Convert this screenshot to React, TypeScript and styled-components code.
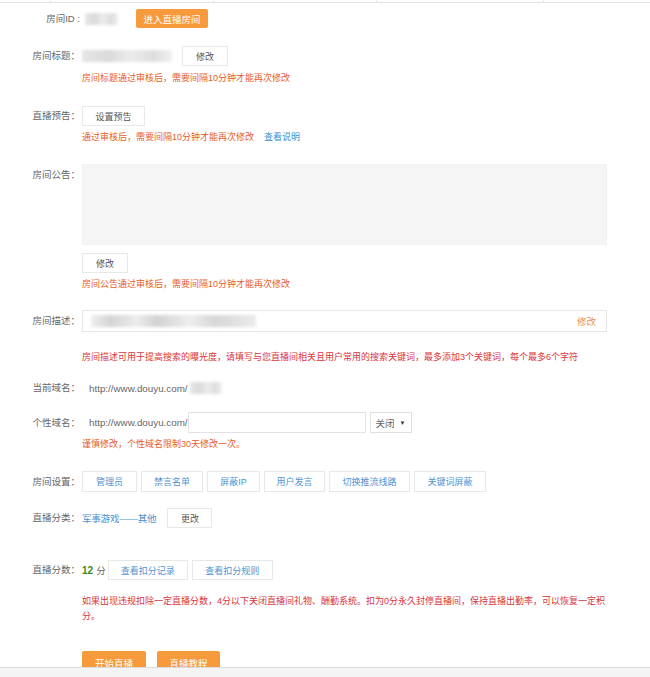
import * as React from "react";
import styled, { createGlobalStyle } from "styled-components";

const GlobalStyle = createGlobalStyle`
  html, body {
    margin: 0;
    padding: 0;
    background: #fff;
  }
  body {
    font-family: "Liberation Sans", "Noto Sans CJK SC", sans-serif;
  }
`;

const Page = styled.div`
  position: relative;
  width: 650px;
  height: 677px;
  overflow: hidden;
  background: #fff;
  color: #666;
  font-size: 9.5px;
`;

const TopStrip = styled.div`
  display: flex;
  height: 2px;
  border-bottom: 1px solid #e3e3e3;
`;

const TopCell = styled.div<{ $w: number }>`
  width: ${(p) => p.$w}px;
  border-right: 1px solid #ececec;
`;

const Form = styled.div`
  display: flex;
  flex-direction: column;
  padding-top: 6px;
`;

const Field = styled.div<{ $mt: number; $top?: boolean }>`
  display: grid;
  grid-template-columns: 82px 525px;
  align-items: ${(p) => (p.$top ? "start" : "center")};
  margin-top: ${(p) => p.$mt}px;
`;

const Label = styled.div<{ $pt?: number }>`
  text-align: right;
  padding-right: 2px;
  padding-top: ${(p) => p.$pt ?? 0}px;
  line-height: 14px;
  color: #666;
  white-space: nowrap;
`;

const Line = styled.div`
  display: flex;
  align-items: center;
`;

const Hint = styled.div<{ $tone: "orange" | "red"; $mt: number }>`
  grid-column: 2;
  margin-top: ${(p) => p.$mt}px;
  font-size: 9px;
  line-height: 15px;
  color: ${(p) => (p.$tone === "orange" ? "#e65d2b" : "#d8343b")};
  white-space: nowrap;
`;

const Link = styled.a`
  margin-left: 10px;
  color: #3d8fd6;
  cursor: pointer;
`;

const Blur = styled.span<{ $w: number; $ml?: number }>`
  display: inline-block;
  width: ${(p) => p.$w}px;
  height: 12px;
  margin-left: ${(p) => p.$ml ?? 0}px;
  background: linear-gradient(
    90deg,
    #e6e6e6 0%,
    #dadada 30%,
    #ececec 55%,
    #dddddd 80%,
    #f0f0f0 100%
  );
  filter: blur(1.5px);
`;

const OrangeButton = styled.button<{ $w: number; $ml?: number; $h?: number }>`
  width: ${(p) => p.$w}px;
  height: ${(p) => p.$h ?? 19}px;
  margin-left: ${(p) => p.$ml ?? 0}px;
  padding: 0;
  border: none;
  border-radius: 2px;
  background: #f69a3c;
  color: #fff;
  font-family: inherit;
  font-size: 9.5px;
  cursor: pointer;
`;

const Button = styled.button<{ $w: number; $ml?: number; $blue?: boolean; $h?: number }>`
  width: ${(p) => p.$w}px;
  height: ${(p) => p.$h ?? 20}px;
  margin-left: ${(p) => p.$ml ?? 0}px;
  padding: 0;
  border: 1px solid #e8e8e8;
  border-radius: 0;
  background: #fff;
  color: ${(p) => (p.$blue ? "#4f93d2" : "#555")};
  font-family: inherit;
  font-size: 9px;
  cursor: pointer;
`;

const NoticeBox = styled.textarea`
  box-sizing: border-box;
  width: 525px;
  height: 81px;
  margin: 0;
  border: 1px solid #f2f2f2;
  background: #f5f5f5;
  resize: none;
  outline: none;
`;

const Stack = styled.div`
  display: flex;
  flex-direction: column;
  align-items: flex-start;
`;

const DescBox = styled.div`
  box-sizing: border-box;
  display: flex;
  align-items: center;
  justify-content: space-between;
  width: 525px;
  height: 22px;
  padding: 0 10px 0 8px;
  border: 1px solid #e6e6e6;
`;

const DescBlur = styled.span`
  display: inline-block;
  width: 165px;
  height: 12px;
  background: linear-gradient(
    90deg,
    #efefef 0%,
    #d4d4d4 12%,
    #ececec 28%,
    #d2d2d2 40%,
    #eeeeee 60%,
    #d6d6d6 75%,
    #ebebeb 100%
  );
  filter: blur(1.5px);
`;

const EditText = styled.span`
  color: #e8923f;
  font-size: 9.5px;
`;

const Url = styled.span`
  padding-left: 7px;
  color: #666;
  font-size: 9.8px;
`;

const DomainInput = styled.input`
  box-sizing: border-box;
  width: 178px;
  height: 21px;
  margin: 0;
  border: 1px solid #e3e3e3;
  outline: none;
`;

const Select = styled.div`
  box-sizing: border-box;
  display: flex;
  align-items: center;
  justify-content: space-between;
  width: 42px;
  height: 21px;
  margin-left: 4px;
  padding: 0 5px 0 5px;
  border: 1px solid #e0e0e0;
  color: #666;
  font-size: 9.5px;
`;

const Caret = styled.span`
  font-size: 6px;
  color: #333;
`;

const ButtonRow = styled.div`
  display: flex;
  align-items: center;
  gap: 4px;
`;

const Category = styled.span`
  color: #4a8fd0;
  letter-spacing: -0.2px;
`;

const Score = styled.span`
  color: #2f8f1f;
  font-weight: bold;
  font-size: 10px;
`;

const Unit = styled.span`
  margin-left: 3px;
  color: #666;
`;

const Actions = styled.div`
  display: flex;
  gap: 11px;
  margin: 27px 0 0 82px;
`;

const BottomBar = styled.div`
  position: absolute;
  left: 0;
  right: 0;
  bottom: 0;
  height: 9px;
  border-top: 1px solid #dcdcdc;
  background: #f4f4f4;
`;

const roomButtons = [
  { text: "管理员", w: 55 },
  { text: "禁言名单", w: 62 },
  { text: "屏蔽IP", w: 53 },
  { text: "用户发言", w: 61 },
  { text: "切换推流线路", w: 81 },
  { text: "关键词屏蔽", w: 72 },
];

export default function App() {
  return (
    <Page>
      <GlobalStyle />
      <TopStrip>
        <TopCell $w={50} />
        <TopCell $w={162} />
        <TopCell $w={162} />
        <TopCell $w={166} />
      </TopStrip>

      <Form>
        <Field $mt={0}>
          <Label>房间ID :</Label>
          <Line>
            <Blur $w={33} $ml={3} />
            <OrangeButton $w={72} $ml={18}>
              进入直播房间
            </OrangeButton>
          </Line>
        </Field>

        <Field $mt={18}>
          <Label>房间标题：</Label>
          <Line>
            <Blur $w={90} />
            <Button $w={46} $ml={10}>
              修改
            </Button>
          </Line>
          <Hint $tone="orange" $mt={5}>
            房间标题通过审核后，需要间隔10分钟才能再次修改
          </Hint>
        </Field>

        <Field $mt={20}>
          <Label>直播预告：</Label>
          <Line>
            <Button $w={63}>设置预告</Button>
          </Line>
          <Hint $tone="orange" $mt={4}>
            通过审核后，需要间隔10分钟才能再次修改
            <Link>查看说明</Link>
          </Hint>
        </Field>

        <Field $mt={19} $top>
          <Label $pt={4}>房间公告：</Label>
          <Stack>
            <NoticeBox readOnly />
            <Button $w={46} style={{ marginTop: 8 }}>
              修改
            </Button>
          </Stack>
          <Hint $tone="orange" $mt={4}>
            房间公告通过审核后，需要间隔10分钟才能再次修改
          </Hint>
        </Field>

        <Field $mt={18}>
          <Label>房间描述：</Label>
          <DescBox>
            <DescBlur />
            <EditText>修改</EditText>
          </DescBox>
          <Hint $tone="red" $mt={18}>
            房间描述可用于提高搜索的曝光度，请填写与您直播间相关且用户常用的搜索关键词，最多添加3个关键词，每个最多6个字符
          </Hint>
        </Field>

        <Field $mt={16}>
          <Label>当前域名：</Label>
          <Line>
            <Url>http://www.douyu.com/</Url>
            <Blur $w={32} $ml={2} />
          </Line>
        </Field>

        <Field $mt={17}>
          <Label>个性域名：</Label>
          <Line>
            <Url>http://www.douyu.com/</Url>
            <DomainInput />
            <Select>
              关闭<Caret>▼</Caret>
            </Select>
          </Line>
          <Hint $tone="orange" $mt={4}>
            谨慎修改，个性域名限制30天修改一次。
          </Hint>
        </Field>

        <Field $mt={19}>
          <Label>房间设置：</Label>
          <ButtonRow>
            {roomButtons.map((b) => (
              <Button key={b.text} $w={b.w} $h={21} $blue>
                {b.text}
              </Button>
            ))}
          </ButtonRow>
        </Field>

        <Field $mt={16}>
          <Label>直播分类：</Label>
          <Line>
            <Category>军事游戏——其他</Category>
            <Button $w={45} $ml={11}>
              更改
            </Button>
          </Line>
        </Field>

        <Field $mt={32}>
          <Label>直播分数：</Label>
          <Line>
            <Score>12</Score>
            <Unit>分</Unit>
            <Button $w={80} $ml={2} $blue>
              查看扣分记录
            </Button>
            <Button $w={81} $ml={4} $blue>
              查看扣分规则
            </Button>
          </Line>
          <Hint $tone="red" $mt={14}>
            如果出现违规扣除一定直播分数，4分以下关闭直播间礼物、酬勤系统。扣为0分永久封停直播间，保持直播出勤率，可以恢复一定积
            <br />
            分。
          </Hint>
        </Field>

        <Actions>
          <OrangeButton $w={64} $h={24}>
            开始直播
          </OrangeButton>
          <OrangeButton $w={63} $h={24}>
            直播教程
          </OrangeButton>
        </Actions>
      </Form>

      <BottomBar />
    </Page>
  );
}
